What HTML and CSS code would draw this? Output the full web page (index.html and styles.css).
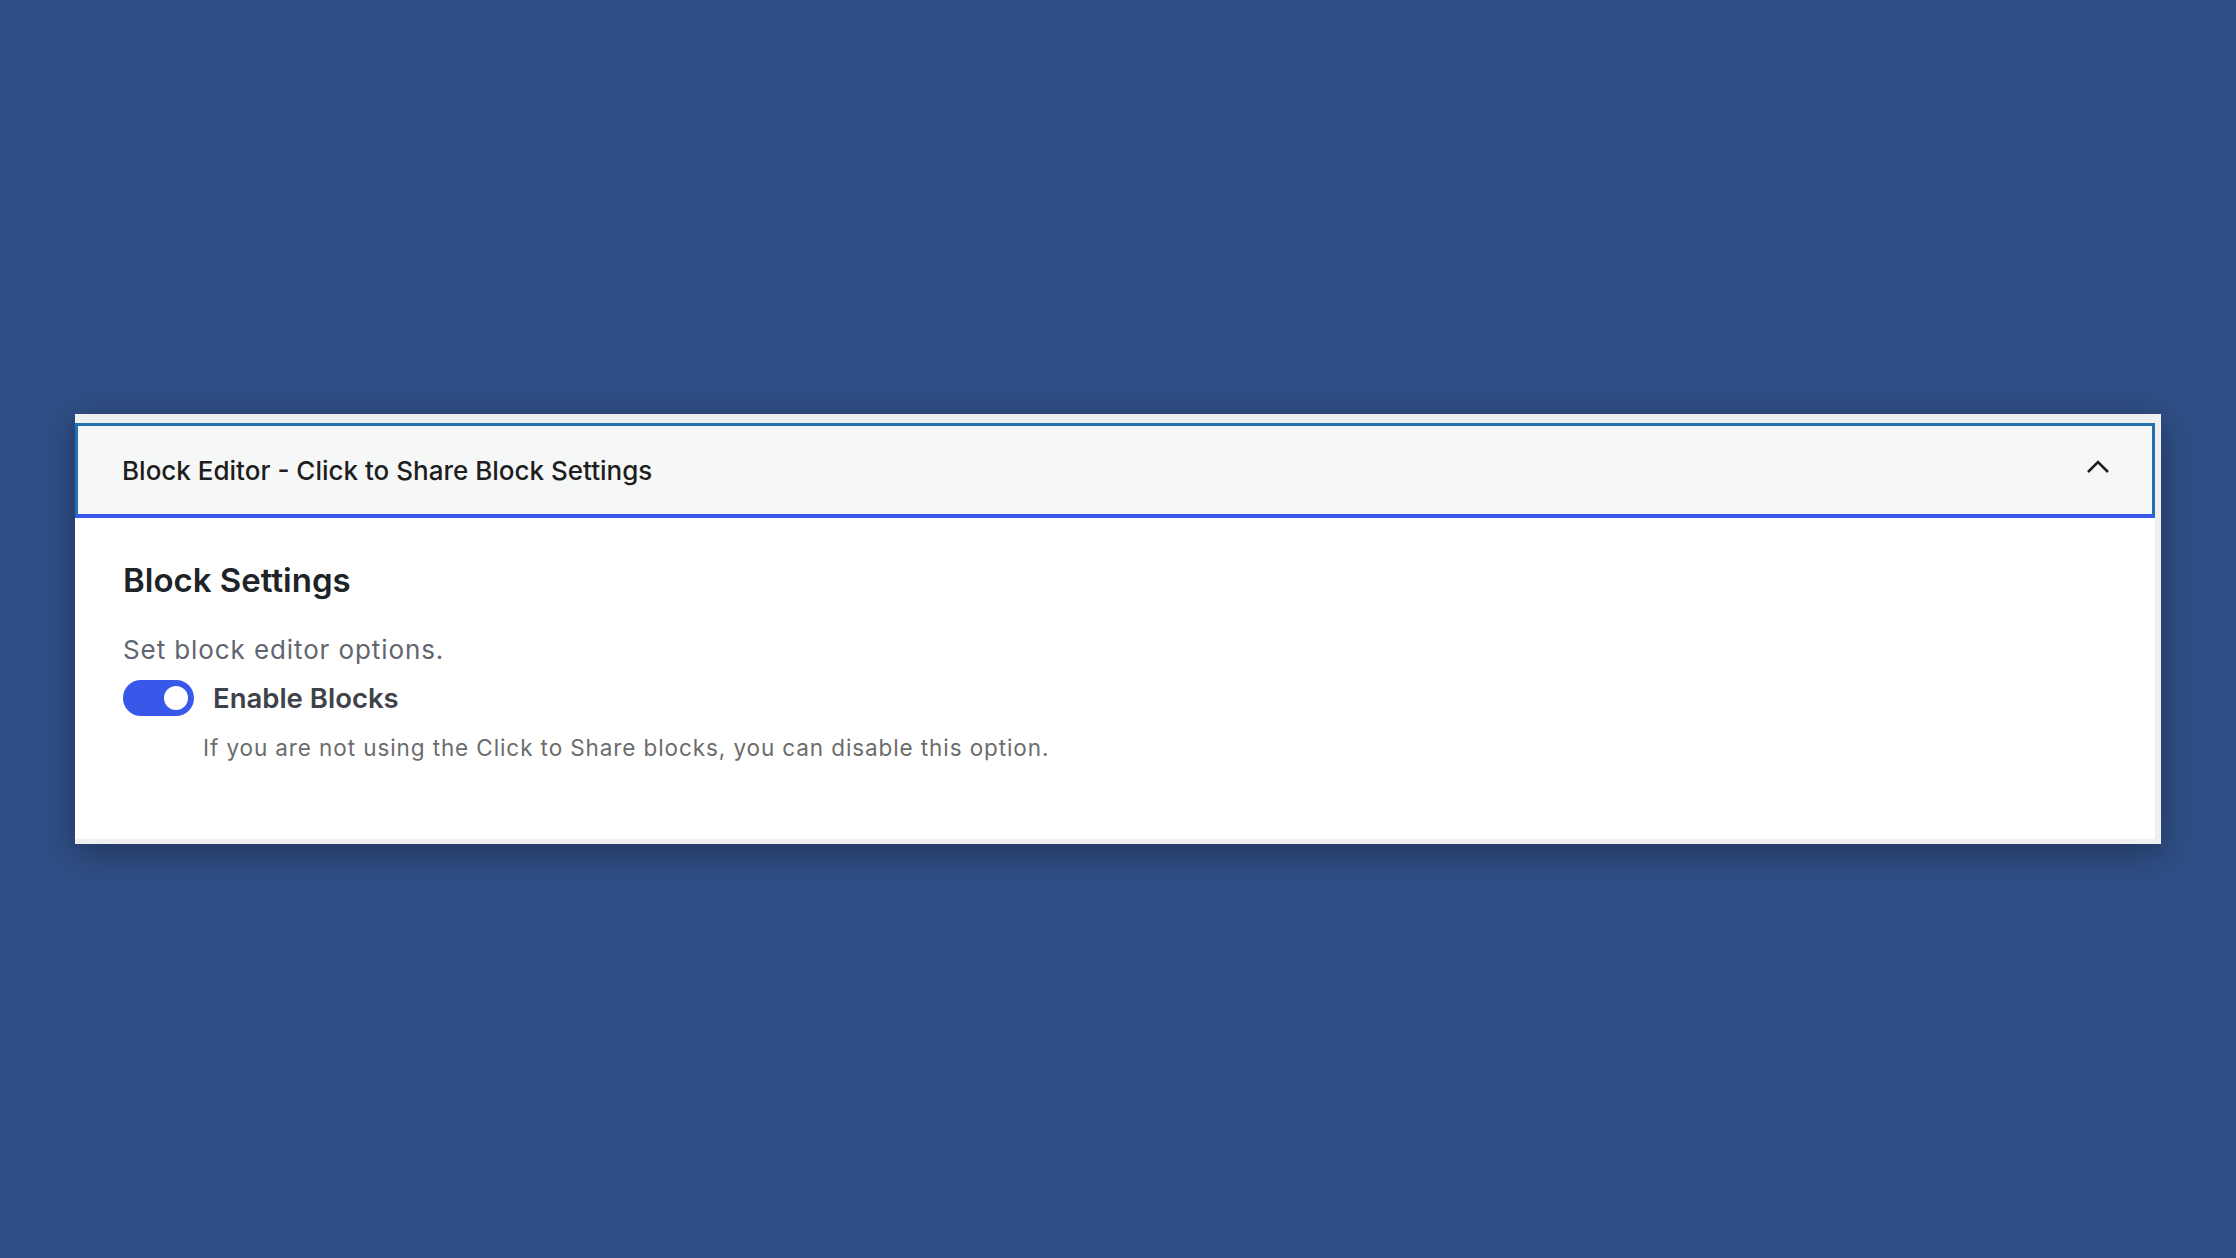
FILE: index.html
```html
<!DOCTYPE html>
<html lang="en">
<head>
    <meta charset="UTF-8">
    <meta name="viewport" content="width=device-width, initial-scale=1.0">
    <title>Block Editor Settings</title>
    <link rel="stylesheet" href="styles.css">
</head>
<body>
<!-- settings panel -->
<div class="page">
  <div class="frame">
    <div class="postbox">
      <div class="postbox-header">
        <h3 class="postbox-title">Block Editor - Click to Share Block Settings</h3>
        <svg class="toggle-arrow" width="24" height="20" viewBox="0 0 24 20" aria-hidden="true">
          <polyline points="2,12 12,2 22,12" fill="none" stroke="#1e1e1e" stroke-width="2.6"/>
        </svg>
      </div>
      <div class="postbox-body">
        <h2 class="section-title">Block Settings</h2>
        <p class="section-desc">Set block editor options.</p>
        <div class="toggle-row">
          <span class="switch"><span class="knob"></span></span>
          <span class="toggle-label">Enable Blocks</span>
        </div>
        <p class="help-text">If you are not using the Click to Share blocks, you can disable this option.</p>
      </div>
    </div>
  </div>
</div>
</body>
</html>
```

FILE: styles.css
```css
/* Page background */
body {
    margin: 0;
    height: 1258px;
    background-color: #2f4e85;
    font-family: Inter, "Noto Sans", sans-serif;
}

.page {
    padding-top: 414px;
    padding-left: 75px;
    width: 2086px;
}

/* Gray admin frame around the panel */
.frame {
    background-color: #f0f0f1;
    padding: 9px 6px 5px 0;
    box-shadow: 0 8px 30px rgba(0, 0, 0, 0.32);
}

.postbox {
    background-color: #fff;
}

/* Header with focus outline */
.postbox-header {
    display: flex;
    align-items: center;
    justify-content: space-between;
    height: 88px;
    padding: 0 42px 0 44px;
    background-color: #f6f7f7;
    border: 3px solid #2271b1;
    border-bottom: 4px solid #3858e9;
}

.postbox-title {
    margin: 0;
    font-size: 26px;
    font-weight: 500;
    color: #1e1e1e;
}

.toggle-arrow {
    display: block;
}

/* Body */
.postbox-body {
    padding: 41px 48px 77px;
}

.section-title {
    margin: 0;
    font-size: 33px;
    line-height: 42px;
    font-weight: 600;
    color: #1d2327;
}

.section-desc {
    margin: 34px 0 0;
    font-size: 26px;
    line-height: 30px;
    letter-spacing: 0.9px;
    color: #5f6670;
}

.toggle-row {
    display: flex;
    align-items: center;
    gap: 19px;
    margin-top: 15px;
}

.switch {
    display: flex;
    align-items: center;
    justify-content: flex-end;
    width: 71px;
    height: 36px;
    padding: 0 6px;
    box-sizing: border-box;
    border-radius: 18px;
    background-color: #3858e9;
}

.knob {
    width: 24px;
    height: 24px;
    border-radius: 50%;
    background-color: #fff;
}

.toggle-label {
    font-size: 27.5px;
    font-weight: 600;
    color: #3c434a;
}

.help-text {
    margin: 18px 0 0 80px;
    font-size: 22.5px;
    line-height: 28px;
    letter-spacing: 0.9px;
    color: #6c6c6c;
}
```
